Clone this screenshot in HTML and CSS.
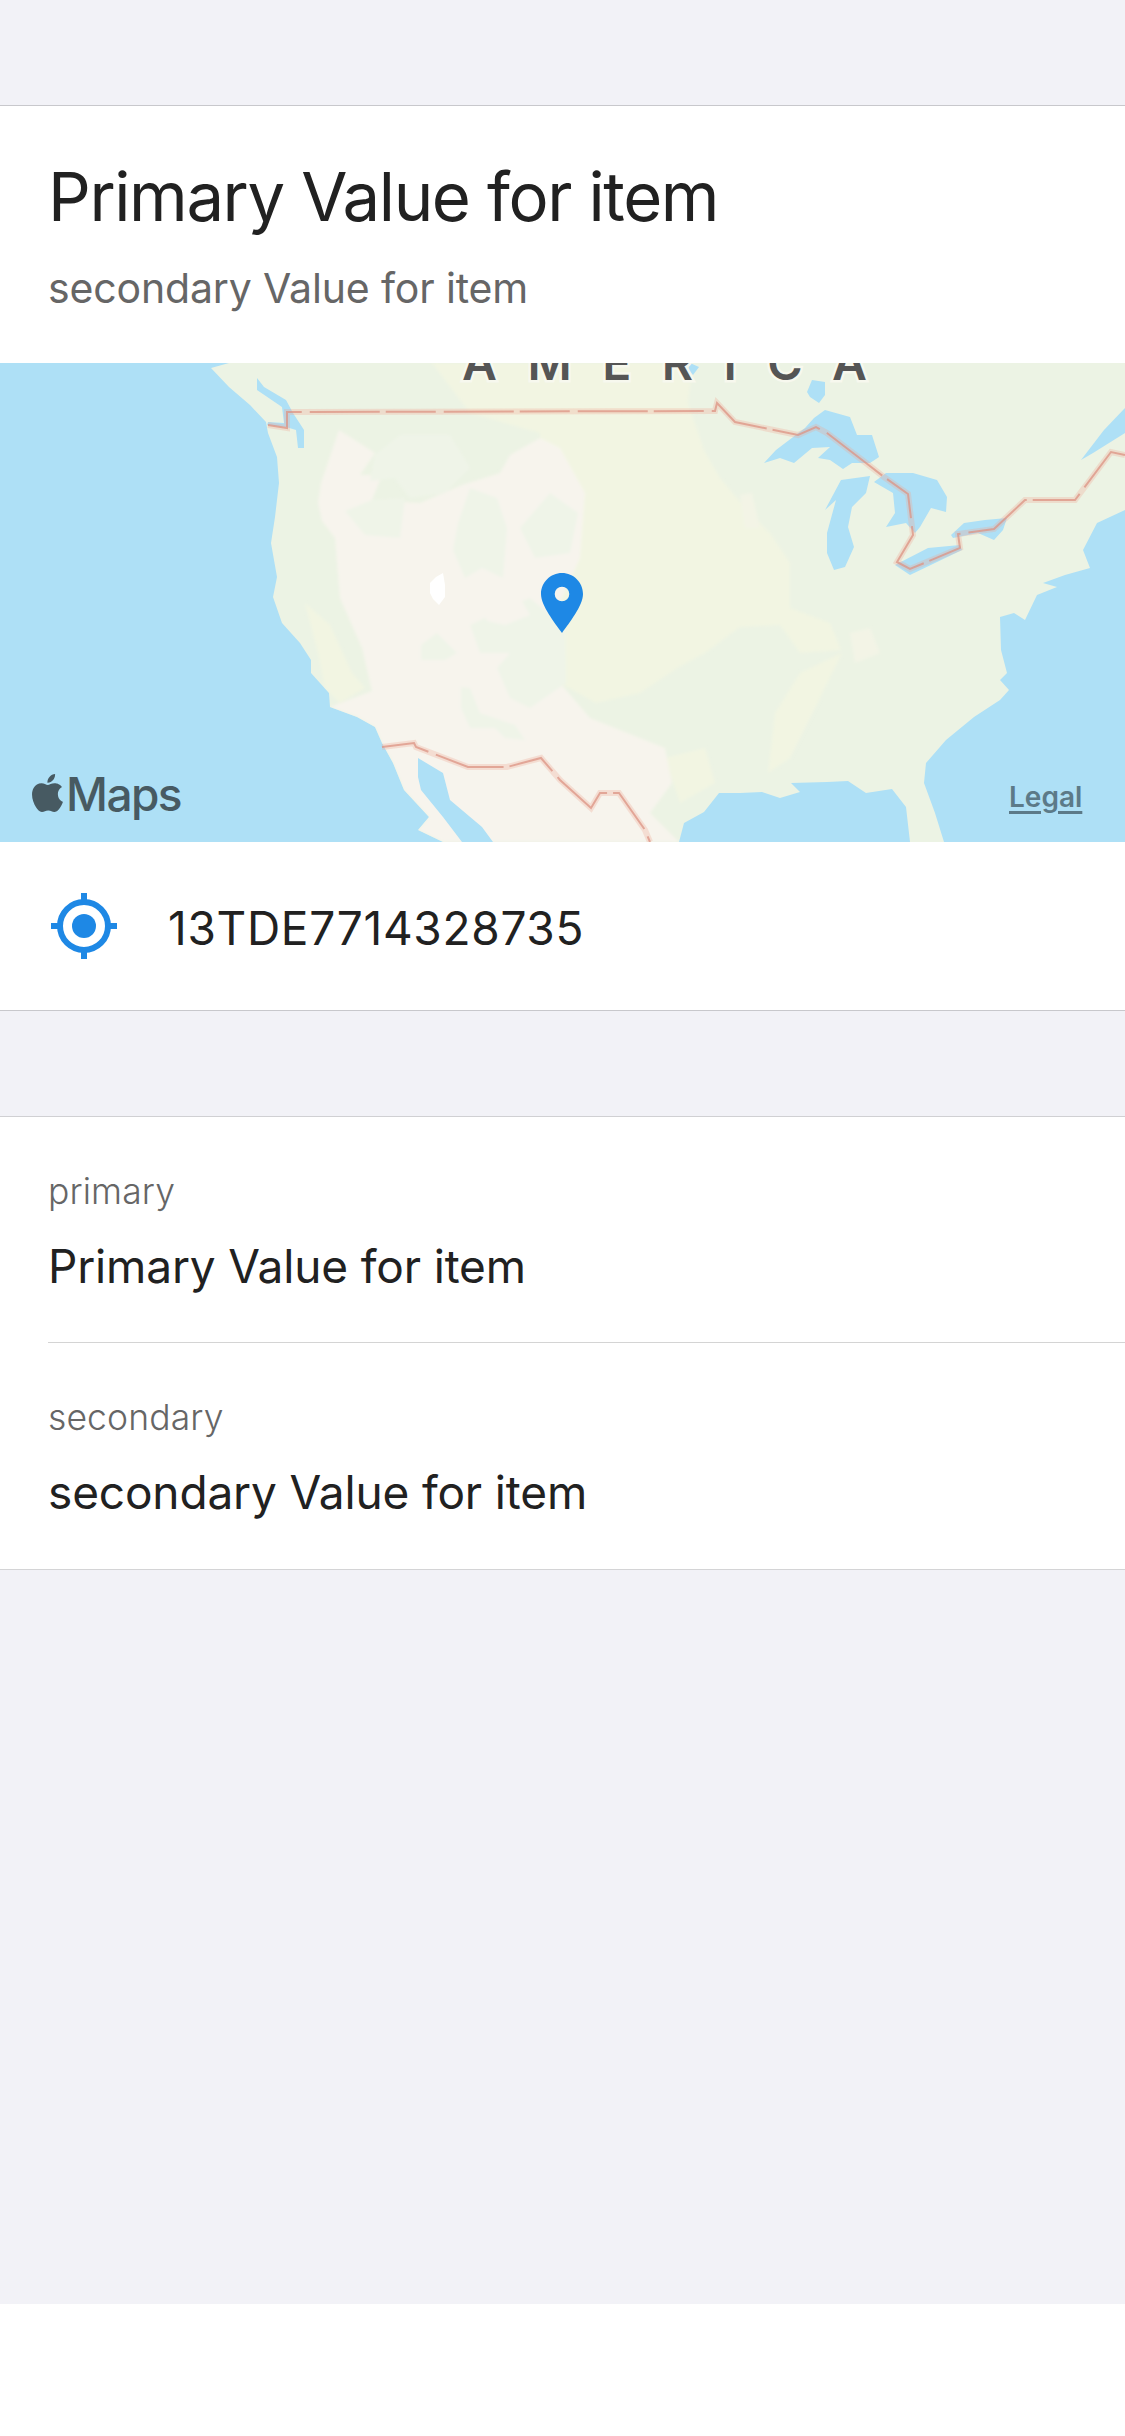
FILE: index.html
```html
<!DOCTYPE html>
<html lang="en">
<head>
<meta charset="utf-8">
<title>Item detail</title>
<link rel="stylesheet" href="styles.css">
</head>
<body>
<div class="screen">
  <div class="gap gap-top"></div>
  <section class="group group-first">
    <header class="head">
      <h1 class="title">Primary Value for item</h1>
      <p class="subtitle">secondary Value for item</p>
    </header>
    <div class="map">
      <svg class="map-art" viewBox="0 0 1125 479" aria-hidden="true">
        <defs><filter id="soft" x="-5%" y="-5%" width="110%" height="110%"><feGaussianBlur stdDeviation="1.500"/></filter></defs>
        <clipPath id="land-clip"><path d="M229 0L211 5L229 24L250 42L266 59L268 70L277 94L279 120L275 154L271 180L277 214L273 234L282 260L300 280L311 297L311 310L329 330L330 344L357 354L375 364L382 380L393 400L404 427L429 454L418 467L443 479L679 479L684 460L704 449L719 430L740 430L762 429L780 435L800 429L791 420L827 419L848 418L866 430L892 426L906 444L910 479L944 479L935 450L924 420L926 400L946 377L974 354L1000 337L1009 327L1000 317L1007 310L1001 287L1000 254L1014 250L1025 257L1037 232L1057 224L1043 220L1065 212L1090 205L1083 187L1097 160L1125 147L1125 0Z"/></clipPath>
        <path class="land" d="M229 0L211 5L229 24L250 42L266 59L268 70L277 94L279 120L275 154L271 180L277 214L273 234L282 260L300 280L311 297L311 310L329 330L330 344L357 354L375 364L382 380L393 400L404 427L429 454L418 467L443 479L679 479L684 460L704 449L719 430L740 430L762 429L780 435L800 429L791 420L827 419L848 418L866 430L892 426L906 444L910 479L944 479L935 450L924 420L926 400L946 377L974 354L1000 337L1009 327L1000 317L1007 310L1001 287L1000 254L1014 250L1025 257L1037 232L1057 224L1043 220L1065 212L1090 205L1083 187L1097 160L1125 147L1125 0Z"/>
        <g clip-path="url(#land-clip)">
          <g filter="url(#soft)">
            <path class="plains" d="M432 0L693 0L688 40L704 87L720 115L745 145L770 170L790 200L790 245L830 260L841 287L800 290L780 262L740 264L705 290L679 304L640 330L596 340L560 320L540 200L540 70L470 50Z"/>
            <path class="plains" d="M842 290L800 310L775 350L768 410L790 395L815 345Z"/>
            <path class="plains" d="M665 395L705 385L715 420L680 440Z"/>
            <path class="plains" d="M305 240L330 262L352 310L365 325L340 340L325 325L318 290Z"/>
            <path class="beige" d="M321 120L339 67L375 90L360 112L382 112L372 137L420 140L462 122L500 110L510 92L540 75L560 85L585 130L580 195L555 250L560 320L590 355L665 385L672 420L650 450L679 479L443 479L418 467L429 454L404 427L393 400L382 380L375 364L357 354L330 344L372 328L362 285L340 235L335 175L322 158L318 140Z"/>
            <path class="green-soft" d="M375 92L400 72L450 72L470 105L445 130L410 135L395 115L370 118Z"/>
            <path class="green-soft" d="M345 148L372 137L405 135L400 175L365 172Z"/>
            <path class="green-soft" d="M453 187L458 160L470 125L497 135L507 165L503 215L482 205L465 215Z"/>
            <path class="green-soft" d="M505 245L530 235L548 250L565 262L566 320L530 345L510 335L497 305L510 290L480 290L470 262Z"/>
            <path class="green-soft" d="M520 165L550 130L578 150L570 190L535 195Z"/>
            <path class="green-soft" d="M421 282L437 270L457 290L445 297L421 297Z"/>
            <path class="green-soft" d="M461 324L470 325L480 350L515 362L525 377L505 375L495 365L470 365L461 345Z"/>
            <path class="beige" d="M480 240L520 235L530 252L505 262L487 258Z"/>
            <path class="patch" d="M850 270L870 265L880 290L855 300Z"/>
            <path class="patch" d="M740 132L752 130L760 165L745 165Z"/>
          </g>
        </g>
        <path class="salt" d="M430 220L436 214L443 210L445 222L445 234L439 242L433 236L430 230Z"/>
        <path class="water" d="M418 395L443 410L450 437L482 464L493 479L462 479L443 454L421 427L418 414Z"/>
        <path class="water" d="M257 15L264 24L286 37L293 50L304 67L304 85L298 85L296 67L286 64L267 62L268 59L284 60L282 44L257 27Z"/>
        <path class="water" d="M1081 97L1104 67L1125 45L1125 70L1093 90Z"/>
        <path class="water" d="M764 100L776 87L805 65L814 55L825 47L850 54L857 72L872 72L879 94L870 100L852 100L843 106L830 97L818 95L830 84L812 85L794 100L780 95Z"/>
        <path class="water" d="M825 147L841 117L870 113L866 130L852 144L848 164L854 184L845 204L834 207L827 190L827 170L836 137Z"/>
        <path class="water" d="M874 119L886 110L913 110L937 117L947 134L946 149L931 145L920 164L915 170L906 160L886 164L895 150L893 130Z"/>
        <path class="water" d="M895 202L928 185L960 182L962 187L910 212Z"/>
        <path class="water" d="M951 172L964 160L985 157L1007 155L1003 167L994 177L978 170L953 175Z"/>
        <path class="water" d="M812 17L825 19L825 32L819 40L810 34L807 29Z"/>
        <path class="water" d="M690 0L699 4L693 12L688 7Z"/>
        <g class="border-band">
          <path d="M268 62L287 65L287 49L296 49L715 48L717 40L735 59L798 72L816 64L827 70L866 100L884 114L908 131L913 172L897 199L910 206L960 185L958 171L994 166L1025 137L1075 137L1111 89L1125 92"/>
          <path d="M382 384L414 380L416 384L468 404L507 404L541 395L560 417L591 445L600 430L619 430L645 467L650 479"/>
        </g>
        <g class="border-line">
          <path d="M268 62L287 65L287 49L296 49L715 48L717 40L735 59L798 72L816 64L827 70L866 100L884 114L908 131L913 172L897 199L910 206L960 185L958 171L994 166L1025 137L1075 137L1111 89L1125 92"/>
          <path d="M382 384L414 380L416 384L468 404L507 404L541 395L560 417L591 445L600 430L619 430L645 467L650 479"/>
        </g>
        <text class="region" x="462" y="17">AMERICA</text>
        <path class="pin" fill-rule="evenodd" d="M562 210C550.400 210 541 219.400 541 231C541 243 555 260 562 270C569 260 583 243 583 231C583 219.400 573.600 210 562 210ZM562 223.700A7.300 7.300 0 1 1 562 238.300A7.300 7.300 0 1 1 562 223.700Z"/>
      </svg>
      <div class="maps-brand">
        <svg class="apple" viewBox="2.500 0 19 24" aria-hidden="true"><path d="M12.152 6.896c-.948 0-2.415-1.078-3.96-1.04-2.04.027-3.91 1.183-4.961 3.014-2.117 3.675-.546 9.103 1.519 12.09 1.013 1.454 2.208 3.09 3.792 3.039 1.52-.065 2.09-.987 3.935-.987 1.831 0 2.35.987 3.96.948 1.637-.026 2.676-1.48 3.676-2.948 1.156-1.688 1.636-3.325 1.662-3.415-.039-.013-3.182-1.221-3.22-4.857-.026-3.04 2.48-4.494 2.597-4.559-1.429-2.09-3.623-2.324-4.39-2.376-2-.156-3.675 1.09-4.61 1.09zM15.53 3.83c.843-1.012 1.4-2.427 1.245-3.83-1.207.052-2.662.805-3.532 1.818-.78.896-1.454 2.338-1.273 3.714 1.338.104 2.715-.688 3.559-1.701"/></svg>
        <span class="maps-word">Maps</span>
      </div>
      <span class="legal">Legal</span>
    </div>
    <div class="coord-row">
      <svg class="target" viewBox="0 0 66 66" aria-hidden="true">
        <circle class="target-ring" cx="33" cy="33" r="24"/>
        <circle class="target-dot" cx="33" cy="33" r="12"/>
        <path class="target-dot" d="M30 0h6v9h-6zM30 57h6v9h-6zM0 30h9v6H0zM57 30h9v6h-9z"/>
      </svg>
      <span class="coord-text">13TDE7714328735</span>
    </div>
  </section>
  <div class="gap gap-mid"></div>
  <section class="group group-second">
    <div class="field field-divided">
      <span class="field-label">primary</span>
      <span class="field-value">Primary Value for item</span>
    </div>
    <div class="field">
      <span class="field-label">secondary</span>
      <span class="field-value">secondary Value for item</span>
    </div>
  </section>
  <div class="gap gap-fill"></div>
  <div class="bottom-bar"></div>
</div>
</body>
</html>
```

FILE: styles.css
```css
* { box-sizing: border-box; margin: 0; padding: 0; }
html, body { background: #fff; }
body { font-family: Inter, "Liberation Sans", sans-serif; }
.screen { width: 1125px; height: 2436px; display: flex; flex-direction: column; overflow: hidden; }
.gap { background: #f2f2f7; flex: none; }
.gap-top { height: 105px; }
.gap-mid { height: 105px; }
.gap-fill { flex: 1; }
.bottom-bar { height: 132px; background: #fff; flex: none; }
.group { background: #fff; flex: none; border-bottom: 1px solid #c8c8cc; }
.group-first { border-top: 1px solid #c8c8cc; }
.group-second { border-top: 1px solid #d0d0d3; border-bottom-color: #d4d4d6; }

.head { height: 257px; padding: 49px 48px 0; }
.title { font-weight: 400; font-size: 67px; line-height: 84px; color: #212121; letter-spacing: -1.4px; }
.subtitle { font-weight: 400; font-size: 41px; line-height: 50px; margin-top: 24px; color: #666; letter-spacing: -0.15px; }

.map { position: relative; height: 479px; background: #aee0f6; overflow: hidden; }
.map-art { display: block; width: 1125px; height: 479px; }
.land { fill: #ecf3e4; }
.plains { fill: #f2f5e2; }
.beige { fill: #f7f4ed; }
.patch { fill: #f3f4e6; }
.green-soft { fill: #eff4e8; }
.salt { fill: #fff; }
.water { fill: #aee0f6; }
.border-band path { fill: none; stroke: #efa995; stroke-width: 6; opacity: .3; }
.border-line path { fill: none; stroke: #dc9383; stroke-width: 2; stroke-dasharray: 50 8 70 6; opacity: .75; }
.region { font-family: Inter, "Liberation Sans", sans-serif; font-size: 48px; font-weight: 600; letter-spacing: 30.5px; fill: #555; stroke: #f7f8ee; stroke-width: 5px; paint-order: stroke; }
.pin { fill: #1e88e5; }

.maps-brand { position: absolute; left: 32px; top: 411px; display: flex; align-items: flex-start; gap: 3px; color: #475a62; }
.apple { width: 31px; height: 38px; fill: #475a62; flex: none; }
.maps-word { font-size: 46px; line-height: 46px; font-weight: 500; letter-spacing: -1.6px; margin-top: -3px; }
.legal { position: absolute; left: 1009px; top: 417px; font-size: 28px; line-height: 34px; font-weight: 600; color: #5c7a88; text-decoration: underline; text-decoration-thickness: 3px; text-underline-offset: 4px; }

.coord-row { height: 168px; display: flex; align-items: center; padding-left: 51px; gap: 51px; }
.target { width: 66px; height: 66px; flex: none; }
.target-ring { fill: none; stroke: #1e88e5; stroke-width: 6; }
.target-dot { fill: #1e88e5; }
.coord-text { font-size: 46px; line-height: 56px; color: #212121; letter-spacing: 0.7px; padding-top: 3px; }

.field { margin-left: 48px; height: 226px; display: flex; flex-direction: column; padding-top: 53px; }
.field-divided { height: 226px; border-bottom: 1px solid #d4d4d4; }
.field-label { font-size: 35.500px; line-height: 44px; font-weight: 300; color: #666; letter-spacing: 0.1px; }
.field-value { font-size: 46px; line-height: 56px; margin-top: 24px; color: #212121; letter-spacing: -0.15px; }
```
